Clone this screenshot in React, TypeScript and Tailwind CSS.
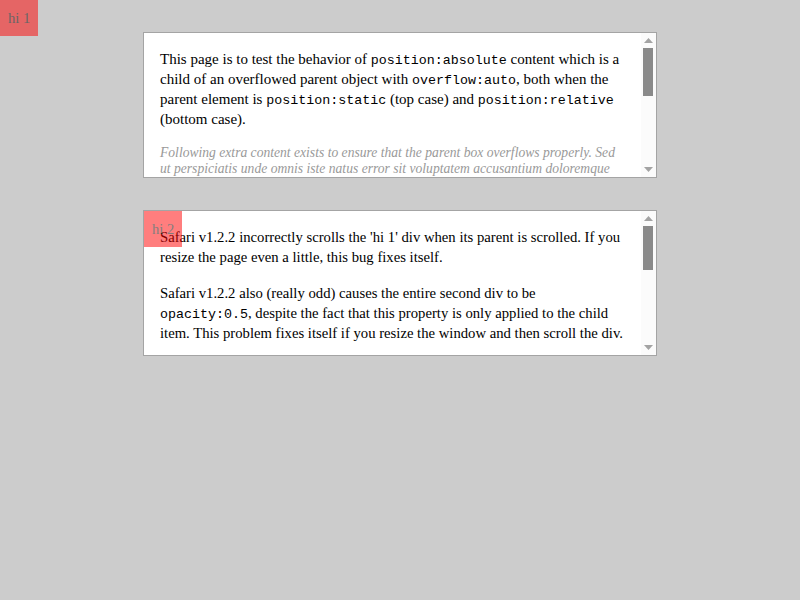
import React from "react";

const serif = "font-['Liberation_Serif','Times_New_Roman',serif]";
const mono = "font-['Liberation_Mono','Courier_New',monospace] text-[13.333px] leading-none";

function Code({ children }: { children: React.ReactNode }) {
  return <code className={mono}>{children}</code>;
}

function ScrollBar({ thumbTop, thumbHeight }: { thumbTop: number; thumbHeight: number }) {
  return (
    <div className="relative w-[15px] shrink-0 bg-[#fbfbfb]">
      <svg className="absolute left-[3px] top-[5px]" width="9" height="5" viewBox="0 0 9 5">
        <polygon points="0,5 9,5 4.5,0" fill="#a3a3a3" />
      </svg>
      <div
        className="absolute left-[2px] w-[10px] bg-[#8a8a8a]"
        style={{ top: thumbTop, height: thumbHeight }}
      />
      <svg className="absolute left-[3px] bottom-[5px]" width="9" height="5" viewBox="0 0 9 5">
        <polygon points="0,0 9,0 4.5,5" fill="#a3a3a3" />
      </svg>
    </div>
  );
}

export default function App() {
  return (
    <div className={`min-h-[600px] w-full bg-[#cccccc] pt-[32px] ${serif} text-[14.7px] leading-[20px] text-black`}>
      <div className="absolute left-0 top-0 z-10 h-[36px] w-[38px] bg-[#ff0000] pl-[8px] pt-[8px] leading-[20px] text-black opacity-50">
        hi 1
      </div>

      <div className="mx-auto flex h-[146px] w-[514px] border border-[#a4a4a4] bg-white">
        <div className="flex-1 overflow-hidden px-[16px] pt-[16px]">
          <p className="text-[15px]">
            This page is to test the behavior of <Code>position:absolute</Code> content which is a child of an
            overflowed parent object with <Code>overflow:auto</Code>, both when the parent element is{" "}
            <Code>position:static</Code> (top case) and <Code>position:relative</Code> (bottom case).
          </p>
          <p className="mt-[16px] text-[13.6px] italic leading-[16px] text-[#999999]">
            Following extra content exists to ensure that the parent box overflows properly. Sed ut perspiciatis
            unde omnis iste natus error sit voluptatem accusantium doloremque laudantium, totam rem aperiam, eaque
            ipsa quae ab illo inventore veritatis et quasi architecto beatae vitae dicta sunt explicabo.
          </p>
        </div>
        <ScrollBar thumbTop={15} thumbHeight={48} />
      </div>

      <div className="relative mx-auto mt-[32px] flex h-[146px] w-[514px] border border-[#a4a4a4] bg-white">
        <div className="absolute left-0 top-0 z-10 h-[36px] w-[38px] bg-[#ff0000] pl-[8px] pt-[8px] text-[14.5px] leading-[20px] text-black opacity-50">
          hi 2
        </div>
        <div className="flex-1 overflow-hidden px-[16px] pt-[16px]">
          <p>
            Safari v1.2.2 incorrectly scrolls the 'hi 1' div when its parent is scrolled. If you resize the page
            even a little, this bug fixes itself.
          </p>
          <p className="mt-[16px]">
            Safari v1.2.2 also (really odd) causes the entire second div to be <Code>opacity:0.5</Code>, despite
            the fact that this property is only applied to the child item. This problem fixes itself if you
            resize the window and then scroll the div.
          </p>
        </div>
        <ScrollBar thumbTop={15} thumbHeight={44} />
      </div>
    </div>
  );
}
